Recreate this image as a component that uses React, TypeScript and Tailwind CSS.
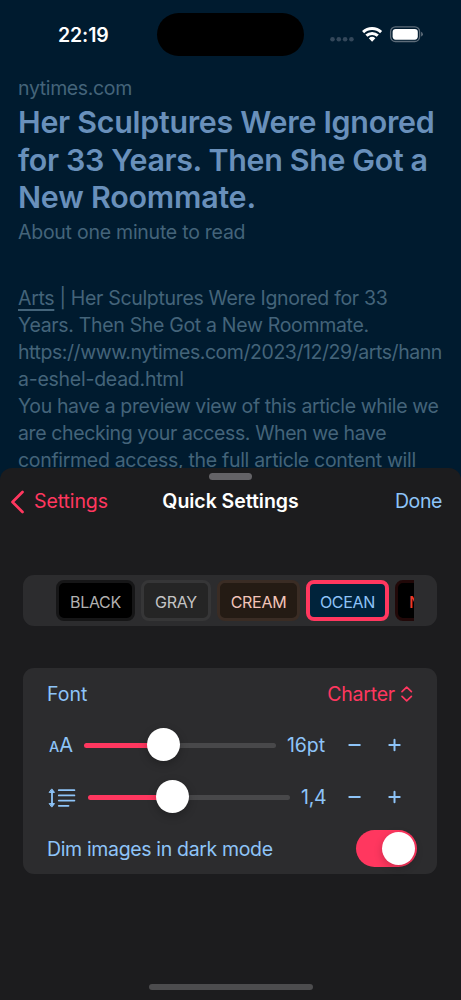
import React from "react";

type Line = { text: string; cls: string };

const titleLines: Line[] = [
  { text: "Her Sculptures Were Ignored", cls: "tracking-[-0.27px]" },
  { text: "for 33 Years. Then She Got a", cls: "tracking-[-0.35px]" },
  { text: "New Roommate.", cls: "tracking-[-0.2px]" },
];

const bodyLines: Line[] = [
  { text: "Years. Then She Got a New Roommate.", cls: "tracking-[-0.32px]" },
  { text: "https://www.nytimes.com/2023/12/29/arts/hann", cls: "tracking-[-0.44px]" },
  { text: "a-eshel-dead.html", cls: "tracking-[-0.25px]" },
  { text: "You have a preview view of this article while we", cls: "tracking-[-0.38px]" },
  { text: "are checking your access. When we have", cls: "tracking-[-0.39px]" },
  { text: "confirmed access, the full article content will", cls: "tracking-[-0.31px]" },
];

function StatusBar() {
  return (
    <div className="flex h-[70px] shrink-0 items-start pt-[13px]">
      <div className="w-[157px] pt-[10px] pl-[58px] text-[19.5px] leading-6 font-semibold tracking-[-0.1px] text-white">22:19</div>
      <div className="h-[43px] w-[147px] rounded-full bg-black" />
      <svg className="mt-[7px] ml-[26px]" width="94" height="30" viewBox="0 0 94 30">
        <g fill="#33475a">
          <circle cx="2.5" cy="19.3" r="2.3" />
          <circle cx="8.8" cy="19.3" r="2.3" />
          <circle cx="15.1" cy="19.3" r="2.3" />
          <circle cx="21.4" cy="19.3" r="2.3" />
        </g>
        <g fill="none" stroke="#fff" strokeWidth="3">
          <path d="M33.1 12.1 A13.1 13.1 0 0 1 51.1 12.1" />
          <path d="M36.4 15.7 A8.4 8.4 0 0 1 47.8 15.7" />
        </g>
        <path d="M38.8 18.2 A5 5 0 0 1 45.4 18.2 L42.1 21.8 Z" fill="#fff" />
        <rect x="60.6" y="6.9" width="29" height="14.6" rx="4.8" fill="none" stroke="#5d6c79" strokeWidth="1.3" />
        <rect x="62.6" y="8.9" width="25.2" height="10.8" rx="3.1" fill="#fff" />
        <path d="M91.2 11.8 Q92.8 12.6 92.8 14.2 Q92.8 15.8 91.2 16.6 Z" fill="#667481" />
      </svg>
    </div>
  );
}

function Chip({ label, cls }: { label: string; cls: string }) {
  return (
    <div className={`flex shrink-0 items-center justify-center rounded-[8px] pt-[2px] text-[16px] tracking-[-0.3px] whitespace-nowrap ${cls}`}>
      {label}
    </div>
  );
}

function Slider({ cls, fill }: { cls: string; fill: string }) {
  return (
    <div className={`flex h-[33px] items-center ${cls}`}>
      <div className={`mt-[2px] h-[5px] rounded-l-full bg-[#ff375f] ${fill}`} />
      <div className="z-10 -mx-1 size-[33px] shrink-0 rounded-full bg-white shadow-[0_3px_9px_rgba(0,0,0,0.25)]" />
      <div className="mt-[2px] h-[5px] grow rounded-r-full bg-[#48484a]" />
    </div>
  );
}

function Stepper() {
  return (
    <svg className="mr-[36px] ml-auto" width="54" height="16" viewBox="0 0 54 16" stroke="#8ec4f8" strokeWidth="2" strokeLinecap="round">
      <path d="M2.3 8 H12.8 M42.3 8 H52.7 M47.5 2.8 V13.2" />
    </svg>
  );
}

export default function App() {
  return (
    <div className="flex h-[1000px] w-[461px] flex-col overflow-hidden bg-[#001b2f] font-['Inter','Liberation_Sans',sans-serif]">
      <div className="flex h-[468px] shrink-0 flex-col overflow-hidden whitespace-nowrap">
        <StatusBar />
        <div className="px-[18px]">
          <div className="h-[27px] pt-[6px] text-[19.5px] leading-6 tracking-[-0.36px] text-[#44647a]">nytimes.com</div>
          <h1 className="pt-[7px] text-[30.4px] leading-[37.5px] font-semibold text-[#6990bb]">
            {titleLines.map((l) => (
              <div key={l.text} className={l.cls}>{l.text}</div>
            ))}
          </h1>
          <div className="mt-[3px] h-[27px] text-[19.5px] leading-6 tracking-[-0.25px] text-[#44647a]">About one minute to read</div>
          <div className="mt-[38px] text-[19.5px] leading-[27px] text-[#44647a]">
            <div className="tracking-[-0.32px]">
              <span className="underline decoration-[1.5px] underline-offset-[4px]">Arts</span> | Her Sculptures Were Ignored for 33
            </div>
            {bodyLines.map((l) => (
              <div key={l.text} className={l.cls}>{l.text}</div>
            ))}
          </div>
        </div>
      </div>

      <div className="flex h-[532px] shrink-0 flex-col rounded-t-[12px] bg-[#1c1c1e]">
        <div className="mx-auto mt-[5px] h-[7px] w-[43px] shrink-0 rounded-full bg-[#646367]" />
        <div className="mt-[7px] grid h-[28px] shrink-0 grid-cols-3 items-center whitespace-nowrap">
          <div className="flex items-center pl-[10px] text-[19.5px] text-[#ff375f]">
            <svg width="14" height="24" viewBox="0 0 14 24" fill="none" stroke="currentColor" strokeWidth="2.7" strokeLinecap="round" strokeLinejoin="round">
              <path d="M12.5 2 L2.5 12 L12.5 22" />
            </svg>
            <span className="ml-[10px] tracking-[-0.1px]">Settings</span>
          </div>
          <div className="text-center text-[19.5px] font-semibold tracking-[-0.04px] text-white">Quick Settings</div>
          <div className="pr-[19px] text-right text-[19.5px] tracking-[-0.4px] text-[#8ec4f8]">Done</div>
        </div>

        <div className="mt-[60px] mr-6 ml-[23px] h-[51px] shrink-0 rounded-[11px] bg-[#2c2c2e] px-[23px] pt-[4px]">
          <div className="flex h-[43px] items-center gap-[6px] overflow-hidden pl-[10px]">
            <Chip label="BLACK" cls="h-[41px] w-[79px] border-3 border-[#161617] bg-black text-[#b1b1b1]" />
            <Chip label="GRAY" cls="h-[41px] w-[70px] border-3 border-[#363637] bg-[#252525] text-[#c4c4c4]" />
            <Chip label="CREAM" cls="h-[41px] w-[83px] border-3 border-[#3a2c24] bg-[#241b14] text-[#f3c5b9]" />
            <Chip label="OCEAN" cls="h-[41px] w-[83px] border-4 border-[#ff375f] bg-[#00233b] text-[#8ec4f8]" />
            <div className="flex h-[41px] w-[79px] shrink-0 items-center rounded-[8px] border-3 border-[#210808] bg-black pt-[2px] pl-[11px] text-[16px] font-medium text-[#f03a2c]">N</div>
          </div>
        </div>

        <div className="mt-[42px] mr-6 ml-[23px] flex h-[206px] shrink-0 flex-col rounded-[11px] bg-[#2c2c2e] text-[19.5px] whitespace-nowrap text-[#8ec4f8]">
          <div className="flex h-[51px] items-center justify-between pt-[2px] pr-[24px] pl-[24px]">
            <span>Font</span>
            <span className="flex items-center text-[#ff375f]">
              <span className="tracking-[-0.2px]">Charter</span>
              <svg className="-mt-[2px] ml-[5px]" width="13" height="16" viewBox="0 0 13 16" fill="none" stroke="currentColor" strokeWidth="1.7" strokeLinecap="round" strokeLinejoin="round">
                <path d="M2 5.6 L6.7 1.2 L11.4 5.6 M2 10.4 L6.7 14.8 L11.4 10.4" />
              </svg>
            </span>
          </div>
          <div className="mt-[9px] flex h-[33px] items-center pl-[26px]">
            <span className="w-[35px] shrink-0 pt-[3px] leading-6">
              <span className="text-[14.5px] font-medium">A</span>
              <span className="text-[20px]">A</span>
            </span>
            <Slider cls="w-[192px]" fill="w-[67px]" />
            <span className="ml-[11px] pt-[3px] tracking-[-0.1px]">16pt</span>
            <Stepper />
          </div>
          <div className="mt-[19px] flex h-[33px] items-center pl-[25px]">
            <svg className="mt-[2px] w-[40px] shrink-0" width="40" height="20" viewBox="0 0 40 20" stroke="#8ec4f8" fill="#8ec4f8" strokeLinecap="round" strokeLinejoin="round">
              <path d="M4 4 V16 M10.8 2.2 H26.4 M10.8 7.4 H26.4 M10.8 12.6 H26.4 M10.8 17.8 H20.5" strokeWidth="1.8" fill="none" />
              <path d="M4 1.2 L6.5 4.4 H1.5 Z M4 18.8 L6.5 15.6 H1.5 Z" strokeWidth="1" />
            </svg>
            <Slider cls="w-[202px]" fill="w-[71.5px]" />
            <span className="ml-[11px] pt-[3px] tracking-[-0.3px]">1,4</span>
            <Stepper />
          </div>
          <div className="mt-[17px] flex h-[37px] items-center justify-between pr-[20px] pl-[24px]">
            <span className="pt-[3px] tracking-[-0.35px]">Dim images in dark mode</span>
            <div className="flex h-[37px] w-[61px] items-center justify-end rounded-full bg-[#ff375f] pr-[2px]">
              <div className="size-[33px] rounded-full bg-white shadow-[0_3px_8px_rgba(0,0,0,0.2)]" />
            </div>
          </div>
        </div>
        <div className="mx-auto mt-auto mb-[10px] h-[6px] w-[164px] rounded-full bg-[#4c4c4e]" />
      </div>
    </div>
  );
}
